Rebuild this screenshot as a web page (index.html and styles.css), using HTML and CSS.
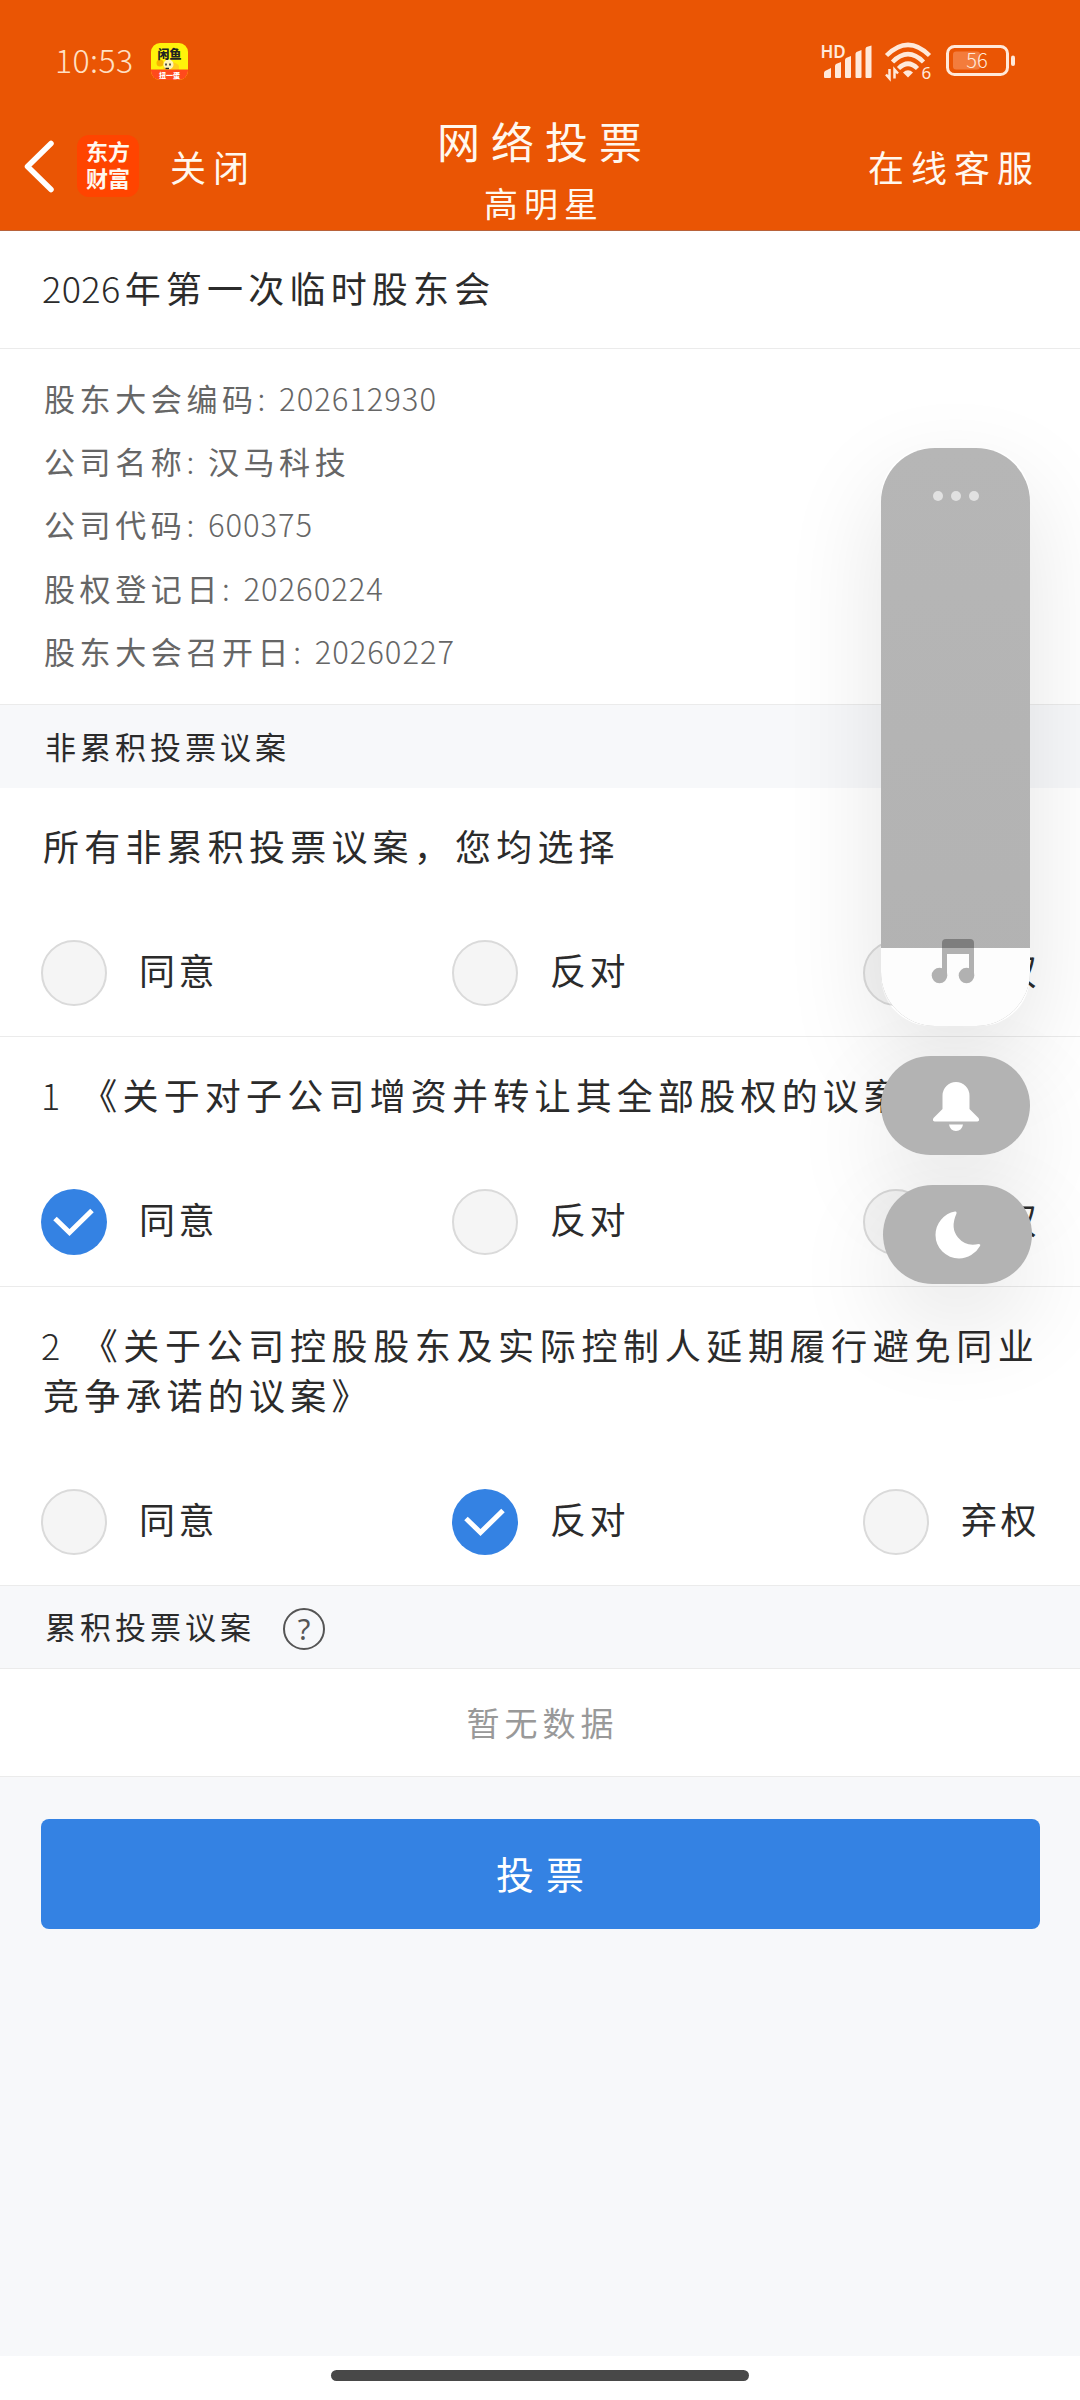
FILE: index.html
```html
<!DOCTYPE html>
<html lang="zh-CN">
<head>
<meta charset="utf-8">
<title>网络投票</title>
<link rel="stylesheet" href="styles.css">
</head>
<body>
<div class="screen">
  <header class="header">
    <div class="status">
      <span class="clock">10:53</span>
      <svg class="app-badge" width="37" height="37" viewBox="0 0 37 37">
        <defs><clipPath id="badge"><rect width="37" height="37" rx="9"/></clipPath></defs>
        <g clip-path="url(#badge)">
          <rect width="37" height="37" fill="#fff20a"/>
          <path d="M12 26a9 9 0 0 1 16-3v4z" fill="#ffcf1a"/>
          <circle cx="9" cy="20" r="3.5" fill="#f7b500"/>
          <circle cx="17.500" cy="21.500" r="5" fill="#fff4b8"/>
          <path d="M15 20.500v2M19 20.500v2M14.500 25.500h3.500" stroke="#222" stroke-width="1.500"/>
          <rect y="26.500" width="37" height="11" fill="#ff4a1c"/>
        </g>
        <text x="18.500" y="15.500" class="badge-name">闲鱼</text>
        <text x="18.500" y="34.500" class="badge-tag">扭一蛋</text>
      </svg>
      <div class="status-icons">
        <svg width="51" height="36" viewBox="0 0 51 36" fill="#ffe9da">
          <text x="-1.500" y="14.500" class="hd">HD</text>
          <path d="M2 34v-4q0-1 1-2l6-3v9q0 1-1 1H3q-1 0-1-1zM13 34V23q0-1 1-2l5-2v15q0 1-1 1h-4q-1 0-1-1zM23 34V17q0-1 1-2l5-2v21q0 1-1 1h-4q-1 0-1-1zM33.500 34V11q0-1 1-2l5-2v27q0 1-1 1h-4q-1 0-1-1zM43.500 34V6q0-1 1-2l5-1.500V34q0 1-1 1h-4q-1 0-1-1z"/>
        </svg>
        <svg class="wifi" width="46" height="38" viewBox="0 0 46 38" fill="none" stroke="#ffe9da">
          <path d="M1.500 13.500Q23-8 44.500 13.500M7.500 20Q23 4.500 38.500 20M13.500 26.500Q23 17 32.500 26.500" stroke-width="4.500"/>
          <path d="M18 30.500q5-4.500 10 0l-5 5z" fill="#ffe9da" stroke="none"/>
          <path d="M4.500 27v9.500L1 32.500M9.500 36.500V27.500l3.500 4" stroke-width="2.500"/>
          <text x="36.500" y="36.500" class="wifi-gen">6</text>
        </svg>
        <svg width="70" height="32" viewBox="0 0 70 32">
          <rect x="1.500" y="1.500" width="60" height="28" rx="7" fill="none" stroke="#ffe9da" stroke-width="3"/>
          <rect x="7" y="6.500" width="27" height="18" rx="3" fill="#f37c3c"/>
          <rect x="65" y="10.500" width="4" height="10.500" rx="2" fill="#ffe9da"/>
          <text x="31" y="23" class="charge">56</text>
        </svg>
      </div>
    </div>
    <nav class="nav">
      <div class="nav-left">
        <svg width="30" height="52" viewBox="0 0 30 52"><path d="M27 3.500 3.500 26.500 27 49.500" fill="none" stroke="#fff" stroke-width="5.500" stroke-linecap="round" stroke-linejoin="round"/></svg>
        <div class="brand"><span>东方</span><span>财富</span></div>
        <span class="nav-text close">关闭</span>
      </div>
      <div class="nav-title">
        <h1>网络投票</h1>
        <p>高明星</p>
      </div>
      <span class="nav-text service">在线客服</span>
    </nav>
  </header>

  <h2 class="meeting"><span class="digits">2026</span>年第一次临时股东会</h2>
  <ul class="info">
    <li>股东大会编码<span class="digits">: 202612930</span></li>
    <li>公司名称<span class="digits">: </span>汉马科技</li>
    <li>公司代码<span class="digits">: 600375</span></li>
    <li>股权登记日<span class="digits">: 20260224</span></li>
    <li>股东大会召开日<span class="digits">: 20260227</span></li>
  </ul>

  <div class="section">非累积投票议案</div>
  <section class="item">
    <p class="question">所有非累积投票议案，您均选择</p>
    <div class="options">
      <label class="option"><i class="radio"></i>同意</label>
      <label class="option"><i class="radio"></i>反对</label>
      <label class="option"><i class="radio"></i>弃权</label>
    </div>
  </section>
  <section class="item proposal">
    <p class="question"><span class="index">1</span>《关于对子公司增资并转让其全部股权的议案》</p>
    <div class="options">
      <label class="option"><i class="radio on"><svg viewBox="0 0 66 66"><path d="M14 29.500 28.500 43.500 51 21.500"/></svg></i>同意</label>
      <label class="option"><i class="radio"></i>反对</label>
      <label class="option"><i class="radio"></i>弃权</label>
    </div>
  </section>
  <section class="item">
    <p class="question"><span class="index">2</span>《关于公司控股股东及实际控制人延期履行避免同业竞争承诺的议案》</p>
    <div class="options">
      <label class="option"><i class="radio"></i>同意</label>
      <label class="option"><i class="radio on"><svg viewBox="0 0 66 66"><path d="M14 29.500 28.500 43.500 51 21.500"/></svg></i>反对</label>
      <label class="option"><i class="radio"></i>弃权</label>
    </div>
  </section>

  <div class="section ruled">累积投票议案<span class="help">?</span></div>
  <p class="empty">暂无数据</p>
  <main class="submit"><button class="vote">投票</button></main>
  <footer class="gesture"><i></i></footer>

  <aside class="volume">
    <div class="float slider">
      <div class="slider-track">
        <svg width="149" height="578" viewBox="0 0 149 578">
          <g fill="#e1e1e1"><circle cx="57" cy="48" r="5"/><circle cx="75" cy="48" r="5"/><circle cx="93" cy="48" r="5"/></g>
          <path fill="#fdfdfd" d="M0 500h149v78H0z"/>
          <g fill="#b1b1b1"><circle cx="58.500" cy="527.500" r="7.800"/><circle cx="85.500" cy="527.500" r="7.800"/>
          <path d="M61 500h32v27.500h-5V506H66v21.500h-5z"/></g>
          <path fill="#7e7e7e" d="M61 500v-5q0-4 4-4h24q4 0 4 4v5z"/>
        </svg>
      </div>
    </div>
    <div class="float pill">
      <svg width="48" height="50" viewBox="0 0 48 50" fill="#fff">
        <path d="M10.500 14.500a13.500 13.500 0 0 1 27 0V28l9 9q1.500 3-1 3.500H2.500q-2.500-.5-1-3.500l9-9zM17 43.500h14q-1 6-7 6.500-6-.5-7-6.500z"/>
      </svg>
    </div>
    <div class="float pill shifted">
      <svg width="46" height="48" viewBox="0 0 46 48" fill="#fff">
        <path d="M20 .5q2-.5 1.500 2Q15 17 23 26.500T43.500 33q2.500 0 1.500 2A24 24 0 0 1 24 47.500 23.500 23.500 0 0 1 .5 24 24 24 0 0 1 20 .5z"/>
      </svg>
    </div>
  </aside>
</div>
</body>
</html>
```
FILE: styles.css
```css
* { box-sizing: border-box; margin: 0; padding: 0; }

body {
  width: 1080px;
  height: 2400px;
  background: #fff;
  color: #2b2b2b;
  font-family: "Noto Sans CJK SC", "Noto Sans", sans-serif;
  font-weight: 400;
  text-spacing-trim: space-all;
}

.screen {
  position: relative;
  display: flex;
  flex-direction: column;
  width: 1080px;
  height: 2400px;
  overflow: hidden;
}

h1, h2 { font-weight: 400; }
svg { display: block; flex: none; overflow: visible; }

/* Header */
.header {
  height: 231px;
  background: #ea5504;
  border-bottom: 1px solid #b8623a;
  color: #fff8ef;
}

.status {
  display: flex;
  align-items: center;
  height: 101px;
  padding: 21px 64px 0 55px;
}

.clock {
  width: 96px;
  margin-top: -5px;
  font-size: 32px;
  font-weight: 300;
  line-height: 40px;
  letter-spacing: .400px;
  color: #ffe0c4;
}

.badge-name { font-size: 12px; font-weight: 900; text-anchor: middle; fill: #222; }
.badge-tag { font-size: 7px; font-weight: 900; text-anchor: middle; fill: #fff; }

.status-icons {
  display: flex;
  align-items: center;
  margin-left: auto;
}
.wifi { margin: 0 15px 0 12px; }

.hd { font: 600 17px "Noto Sans", sans-serif; }
.wifi-gen { font: 400 17px "Noto Sans", sans-serif; fill: #ffe9da; stroke: none; }
.charge { font: 300 20px "Noto Sans CJK SC", sans-serif; text-anchor: middle; fill: #ffe9da; }

.nav {
  display: grid;
  grid-template-columns: 1fr auto 1fr;
  align-items: center;
  height: 129px;
  padding: 0 42px 0 24px;
}

.nav-left { display: flex; align-items: center; }

.brand {
  display: flex;
  flex-direction: column;
  justify-content: center;
  width: 62px;
  height: 62px;
  margin-left: 23px;
  padding-bottom: 3px;
  border-radius: 12px;
  background: #ff4400;
  text-align: center;
  font-size: 22px;
  font-weight: 700;
  line-height: 27px;
}

.nav-text {
  font-size: 36px;
  line-height: 50px;
  letter-spacing: 7px;
}
.close { margin-left: 31px; }
.service { justify-self: end; margin-right: -2px; }

.nav-title {
  align-self: start;
  padding: 11px 0 0 19px;
  margin-right: -9px;
  text-align: center;
}
.nav-title h1 {
  font-size: 43px;
  line-height: 56px;
  letter-spacing: 11px;
}
.nav-title p {
  margin: 12px 0 0 -2px;
  font-size: 34px;
  line-height: 46px;
  letter-spacing: 6px;
}

/* Meeting summary */
.meeting {
  height: 118px;
  padding: 0 42px;
  border-bottom: 1px solid #ebebeb;
  font-size: 36px;
  line-height: 112px;
  letter-spacing: 5.200px;
}
.digits { font-weight: 300; }
.meeting .digits { margin-right: 4px; letter-spacing: .400px; }

.info {
  height: 355px;
  padding: 17px 44px 0;
  list-style: none;
  color: #666;
  font-size: 31px;
  line-height: 63.200px;
  letter-spacing: 4.600px;
}
.info .digits { letter-spacing: .950px; word-spacing: 5px; }

.section {
  display: flex;
  align-items: center;
  height: 84px;
  padding: 0 45px 3px;
  border-top: 1px solid #ebebeb;
  background: #f7f8fa;
  font-size: 31px;
  letter-spacing: 4px;
}
.section.ruled { border-bottom: 1px solid #ebebeb; }

.help {
  width: 42px;
  height: 42px;
  margin: 7px 0 0 28px;
  border: 2.500px solid #555;
  border-radius: 50%;
  text-align: center;
  font: 400 29px/37px "Noto Sans", sans-serif;
  letter-spacing: 0;
  color: #555;
}

/* Proposals */
.item { padding: 32px 41px 30px; }
.item.proposal { padding-bottom: 31px; }
.item + .item { border-top: 1px solid #ebebeb; }

.question {
  padding-left: 2px;
  font-size: 36px;
  line-height: 50px;
  letter-spacing: 5.200px;
  text-align: justify;
}
.index {
  margin-left: -2px;
  padding-right: 20px;
  font-weight: 300;
  letter-spacing: 1px;
}

.options {
  display: flex;
  justify-content: space-between;
  margin-top: 70px;
}
.option {
  display: flex;
  align-items: flex-start;
  font-size: 36px;
  line-height: 58px;
  letter-spacing: 3.500px;
  margin-right: -1px;
}
.option + .option { margin-left: -5px; }

.radio {
  display: block;
  width: 66px;
  height: 66px;
  margin-right: 32px;
  border: 2px solid #dadada;
  border-radius: 50%;
  background: #f5f5f5;
}
.radio.on { border: 0; background: #3482e3; }
.radio path { fill: none; stroke: #fff; stroke-width: 5; }

.empty {
  height: 107px;
  padding-left: 5px;
  text-align: center;
  color: #999;
  font-size: 33px;
  line-height: 107px;
  letter-spacing: 5px;
}

.submit {
  flex: 1;
  padding: 42px 40px 0 41px;
  border-top: 1px solid #ebebeb;
  background: #f7f8fa;
}
.vote {
  width: 100%;
  height: 110px;
  padding: 0 0 4px 11px;
  border: 0;
  border-radius: 8px;
  background: #3482e3;
  color: #fff;
  font: inherit;
  font-size: 38px;
  letter-spacing: 12px;
}

.gesture {
  height: 44px;
  padding: 14px 331px 0;
  background: #fff;
}
.gesture i {
  display: block;
  height: 11px;
  border-radius: 6px;
  background: #484848;
}

/* System volume panel, floating over the page */
.volume {
  position: absolute;
  z-index: 1;
  top: 448px;
  left: 881px;
  display: flex;
  flex-direction: column;
  gap: 30px;
}
.float {
  width: 149px;
  border-radius: 50px;
}
.float::before {
  content: "";
  position: absolute;
  z-index: -1;
  width: 149px;
  height: 99px;
  border-radius: 50px;
  box-shadow: 0 36px 100px rgba(0, 0, 0, .11);
}
.slider::before { height: 578px; }
.slider-track {
  height: 578px;
  border-radius: 54px;
  overflow: hidden;
  background: linear-gradient(#b6b6b6, #b2b2b2);
}
.pill {
  display: flex;
  align-items: center;
  justify-content: center;
  height: 99px;
  background: #b3b3b3;
}
.pill::before { align-self: flex-start; }
.shifted { margin-left: 2px; }
```
